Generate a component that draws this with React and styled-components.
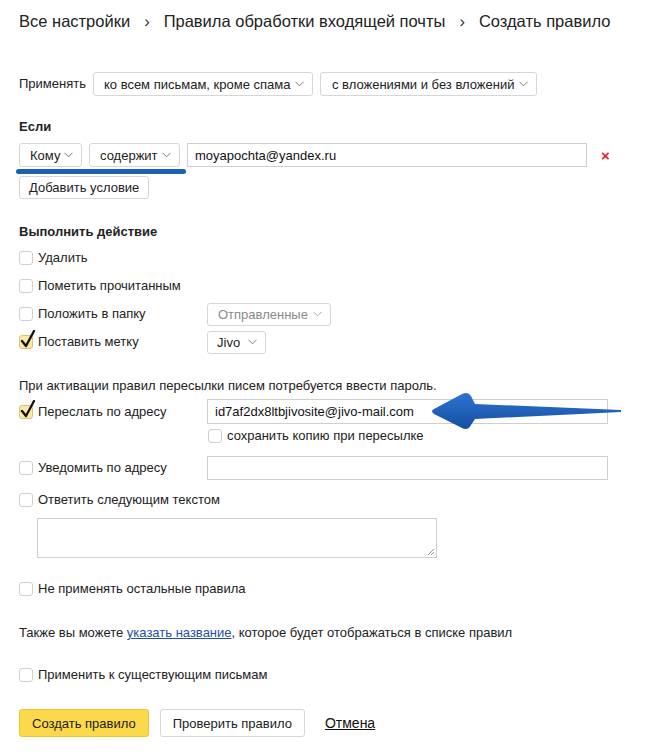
import React from "react";
import styled, { createGlobalStyle } from "styled-components";

const Global = createGlobalStyle`
  html, body { margin: 0; padding: 0; background: #fff; }
  body { font-family: "Liberation Sans", Arial, sans-serif; color: #222; font-size: 13px; }
`;

const Page = styled.div`
  position: relative;
  width: 665px;
  height: 756px;
  padding: 10px 0 0 19px;
  box-sizing: border-box;
  overflow: hidden;
`;

const Crumbs = styled.div`
  display: flex;
  align-items: center;
  gap: 14px;
  font-size: 16.5px;
  line-height: 22px;
  color: #222;
`;

const Sep = styled.span`
  color: #333;
`;

const Row = styled.div`
  position: relative;
  display: flex;
  align-items: center;
  gap: ${(p) => p.$gap ?? 7}px;
  margin-top: ${(p) => p.$mt ?? 0}px;
  height: ${(p) => p.$h ?? 24}px;
  padding-left: ${(p) => p.$pl ?? 0}px;
`;

const Label = styled.span`
  font-size: 13px;
  line-height: 16px;
  color: #222;
  flex: none;
`;

const Title = styled.div`
  font-weight: bold;
  font-size: 13px;
  line-height: 16px;
  margin-top: ${(p) => p.$mt}px;
`;

const SelectBox = styled.div`
  display: flex;
  align-items: center;
  justify-content: space-between;
  box-sizing: border-box;
  height: ${(p) => p.$h ?? 24}px;
  width: ${(p) => p.$w}px;
  padding: 0 8px 0 ${(p) => p.$pl ?? 10}px;
  border: 1px solid #d6d6d6;
  border-radius: 3px;
  background: #fff;
  color: ${(p) => (p.$disabled ? "#8a8a8a" : "#222")};
  font-size: 13px;
  flex: none;
`;

const Chevron = ({ color = "#888" }) => (
  <svg width="9" height="6" viewBox="0 0 9 6">
    <path d="M0.5 0.8 L4.5 4.8 L8.5 0.8" fill="none" stroke={color} strokeWidth="1" />
  </svg>
);

const Select = ({ children, w, h, disabled, pl }) => (
  <SelectBox $w={w} $h={h} $disabled={disabled} $pl={pl}>
    <span>{children}</span>
    <Chevron color={disabled ? "#aaa" : "#777"} />
  </SelectBox>
);

const TextInput = styled.div`
  box-sizing: border-box;
  width: ${(p) => p.$w}px;
  height: ${(p) => p.$h ?? 24}px;
  border: 1px solid #cfcfcf;
  display: flex;
  align-items: center;
  padding-left: 7px;
  font-size: 13px;
  color: #111;
  flex: none;
`;

const Remove = styled.span`
  color: #e8202a;
  font-weight: bold;
  font-size: 15px;
  margin-left: 7px;
  line-height: 1;
`;

const Underline = styled.div`
  position: absolute;
  left: -3px;
  top: 26px;
  width: 170px;
  height: 5px;
  border-radius: 3px;
  background: #1b5fb6;
`;

const Button = styled.button`
  box-sizing: border-box;
  height: ${(p) => p.$h ?? 23}px;
  padding: 0 ${(p) => p.$px ?? 9}px;
  border: 1px solid ${(p) => (p.$primary ? "#e9c43a" : "#d6d6d6")};
  border-radius: 3px;
  background: ${(p) => (p.$primary ? "#fcd94a" : "#fff")};
  font-family: inherit;
  font-size: 13px;
  color: #222;
  cursor: pointer;
  margin-top: ${(p) => p.$mt ?? 0}px;
  flex: none;
`;

const Box = styled.span`
  position: relative;
  box-sizing: border-box;
  width: 14px;
  height: 14px;
  border: 1px solid ${(p) => (p.$checked ? "#d8c27a" : "#cfcfcf")};
  border-radius: 3px;
  background: ${(p) => (p.$checked ? "#fbeaa6" : "#fff")};
  flex: none;
  margin-right: 5px;
`;

const Tick = styled.svg`
  position: absolute;
  left: 0px;
  top: -6px;
`;

const Check = ({ checked }) => (
  <Box $checked={checked}>
    {checked && (
      <Tick width="16" height="20" viewBox="0 0 16 20">
        <path d="M2 11 L6 16 L14 1" fill="none" stroke="#111" strokeWidth="2.3" strokeLinecap="round" strokeLinejoin="round" />
      </Tick>
    )}
  </Box>
);

const CheckLabel = styled.div`
  display: flex;
  align-items: center;
  width: ${(p) => (p.$w ? p.$w + "px" : "auto")};
  flex: none;
`;

const Text = styled.div`
  font-size: 13px;
  line-height: 16px;
  margin-top: ${(p) => p.$mt ?? 0}px;
`;

const Link = styled.a`
  color: #1f4ea8;
  text-decoration: underline;
`;

const Cancel = styled.a`
  color: #111;
  font-size: 14px;
  text-decoration: underline;
  margin-left: 9px;
`;

const TextArea = styled.div`
  position: relative;
  box-sizing: border-box;
  width: 400px;
  height: 40px;
  border: 1px solid #cfcfcf;
  margin: 6px 0 0 18px;
`;

const Grip = styled.svg`
  position: absolute;
  right: 1px;
  bottom: 1px;
`;

const Arrow = styled.svg`
  position: absolute;
  left: 425px;
  top: 389px;
`;

const CheckRow = ({ checked, label, mt, w, h = 24, children }) => (
  <Row $mt={mt} $h={h} $gap={0}>
    <CheckLabel $w={w}>
      <Check checked={checked} />
      <Label>{label}</Label>
    </CheckLabel>
    {children}
  </Row>
);

export default function App() {
  return (
    <Page>
      <Global />
      <Crumbs>
        <span>Все настройки</span>
        <Sep>›</Sep>
        <span>Правила обработки входящей почты</span>
        <Sep>›</Sep>
        <span>Создать правило</span>
      </Crumbs>

      <Row $mt={40}>
        <Label>Применять</Label>
        <Select w={220}>ко всем письмам, кроме спама</Select>
        <Select w={217} pl={11}>с вложениями и без вложений</Select>
      </Row>

      <Title $mt={23}>Если</Title>
      <Row $mt={8}>
        <Select w={63}>Кому</Select>
        <Select w={91}>содержит</Select>
        <TextInput $w={400}>moyapochta@yandex.ru</TextInput>
        <Remove>×</Remove>
        <Underline />
      </Row>
      <Button $mt={9}>Добавить условие</Button>

      <Title $mt={25}>Выполнить действие</Title>
      <CheckRow mt={6} label="Удалить" />
      <CheckRow mt={4} label="Пометить прочитанным" />
      <CheckRow mt={4} label="Положить в папку" w={188}>
        <Select w={124} h={23} disabled>Отправленные</Select>
      </CheckRow>
      <CheckRow mt={4} checked label="Поставить метку" w={188}>
        <Select w={59} h={23} pl={9}>Jivo</Select>
      </CheckRow>

      <Text $mt={24}>При активации правил пересылки писем потребуется ввести пароль.</Text>
      <CheckRow mt={5} h={25} checked label="Переслать по адресу" w={188}>
        <TextInput $w={401} $h={25}>id7af2dx8ltbjivosite@jivo-mail.com</TextInput>
      </CheckRow>
      <Row $h={24} $pl={189} $gap={0}>
        <Check />
        <Label>сохранить копию при пересылке</Label>
      </Row>
      <CheckRow mt={8} label="Уведомить по адресу" w={188}>
        <TextInput $w={401} $h={24} />
      </CheckRow>
      <CheckRow mt={8} label="Ответить следующим текстом" />
      <TextArea>
        <Grip width="8" height="8" viewBox="0 0 8 8">
          <path d="M7 1 L1 7 M7 4 L4 7" stroke="#999" strokeWidth="1" />
        </Grip>
      </TextArea>
      <CheckRow mt={19} label="Не применять остальные правила" />

      <Text $mt={24}>
        Также вы можете <Link href="#">указать название</Link>, которое будет отображаться в списке правил
      </Text>

      <CheckRow mt={22} label="Применить к существующим письмам" />

      <Row $mt={22} $h={28} $gap={11}>
        <Button $primary $h={28} $px={12}>Создать правило</Button>
        <Button $h={28} $px={12}>Проверить правило</Button>
        <Cancel href="#">Отмена</Cancel>
      </Row>

      <Arrow width="200" height="45" viewBox="0 0 200 45">
        <defs>
          <linearGradient id="ag" x1="0" y1="0" x2="0" y2="1">
            <stop offset="0" stopColor="#2d74d2" />
            <stop offset="1" stopColor="#164f9f" />
          </linearGradient>
        </defs>
        <path
          d="M196 21 L50 15 L46 7 Q43 2 37 5 L9 20 Q5 22 9 25 L37 39 Q43 42 46 36 L50 30 L196 23 Z"
          fill="url(#ag)"
        />
      </Arrow>
    </Page>
  );
}
